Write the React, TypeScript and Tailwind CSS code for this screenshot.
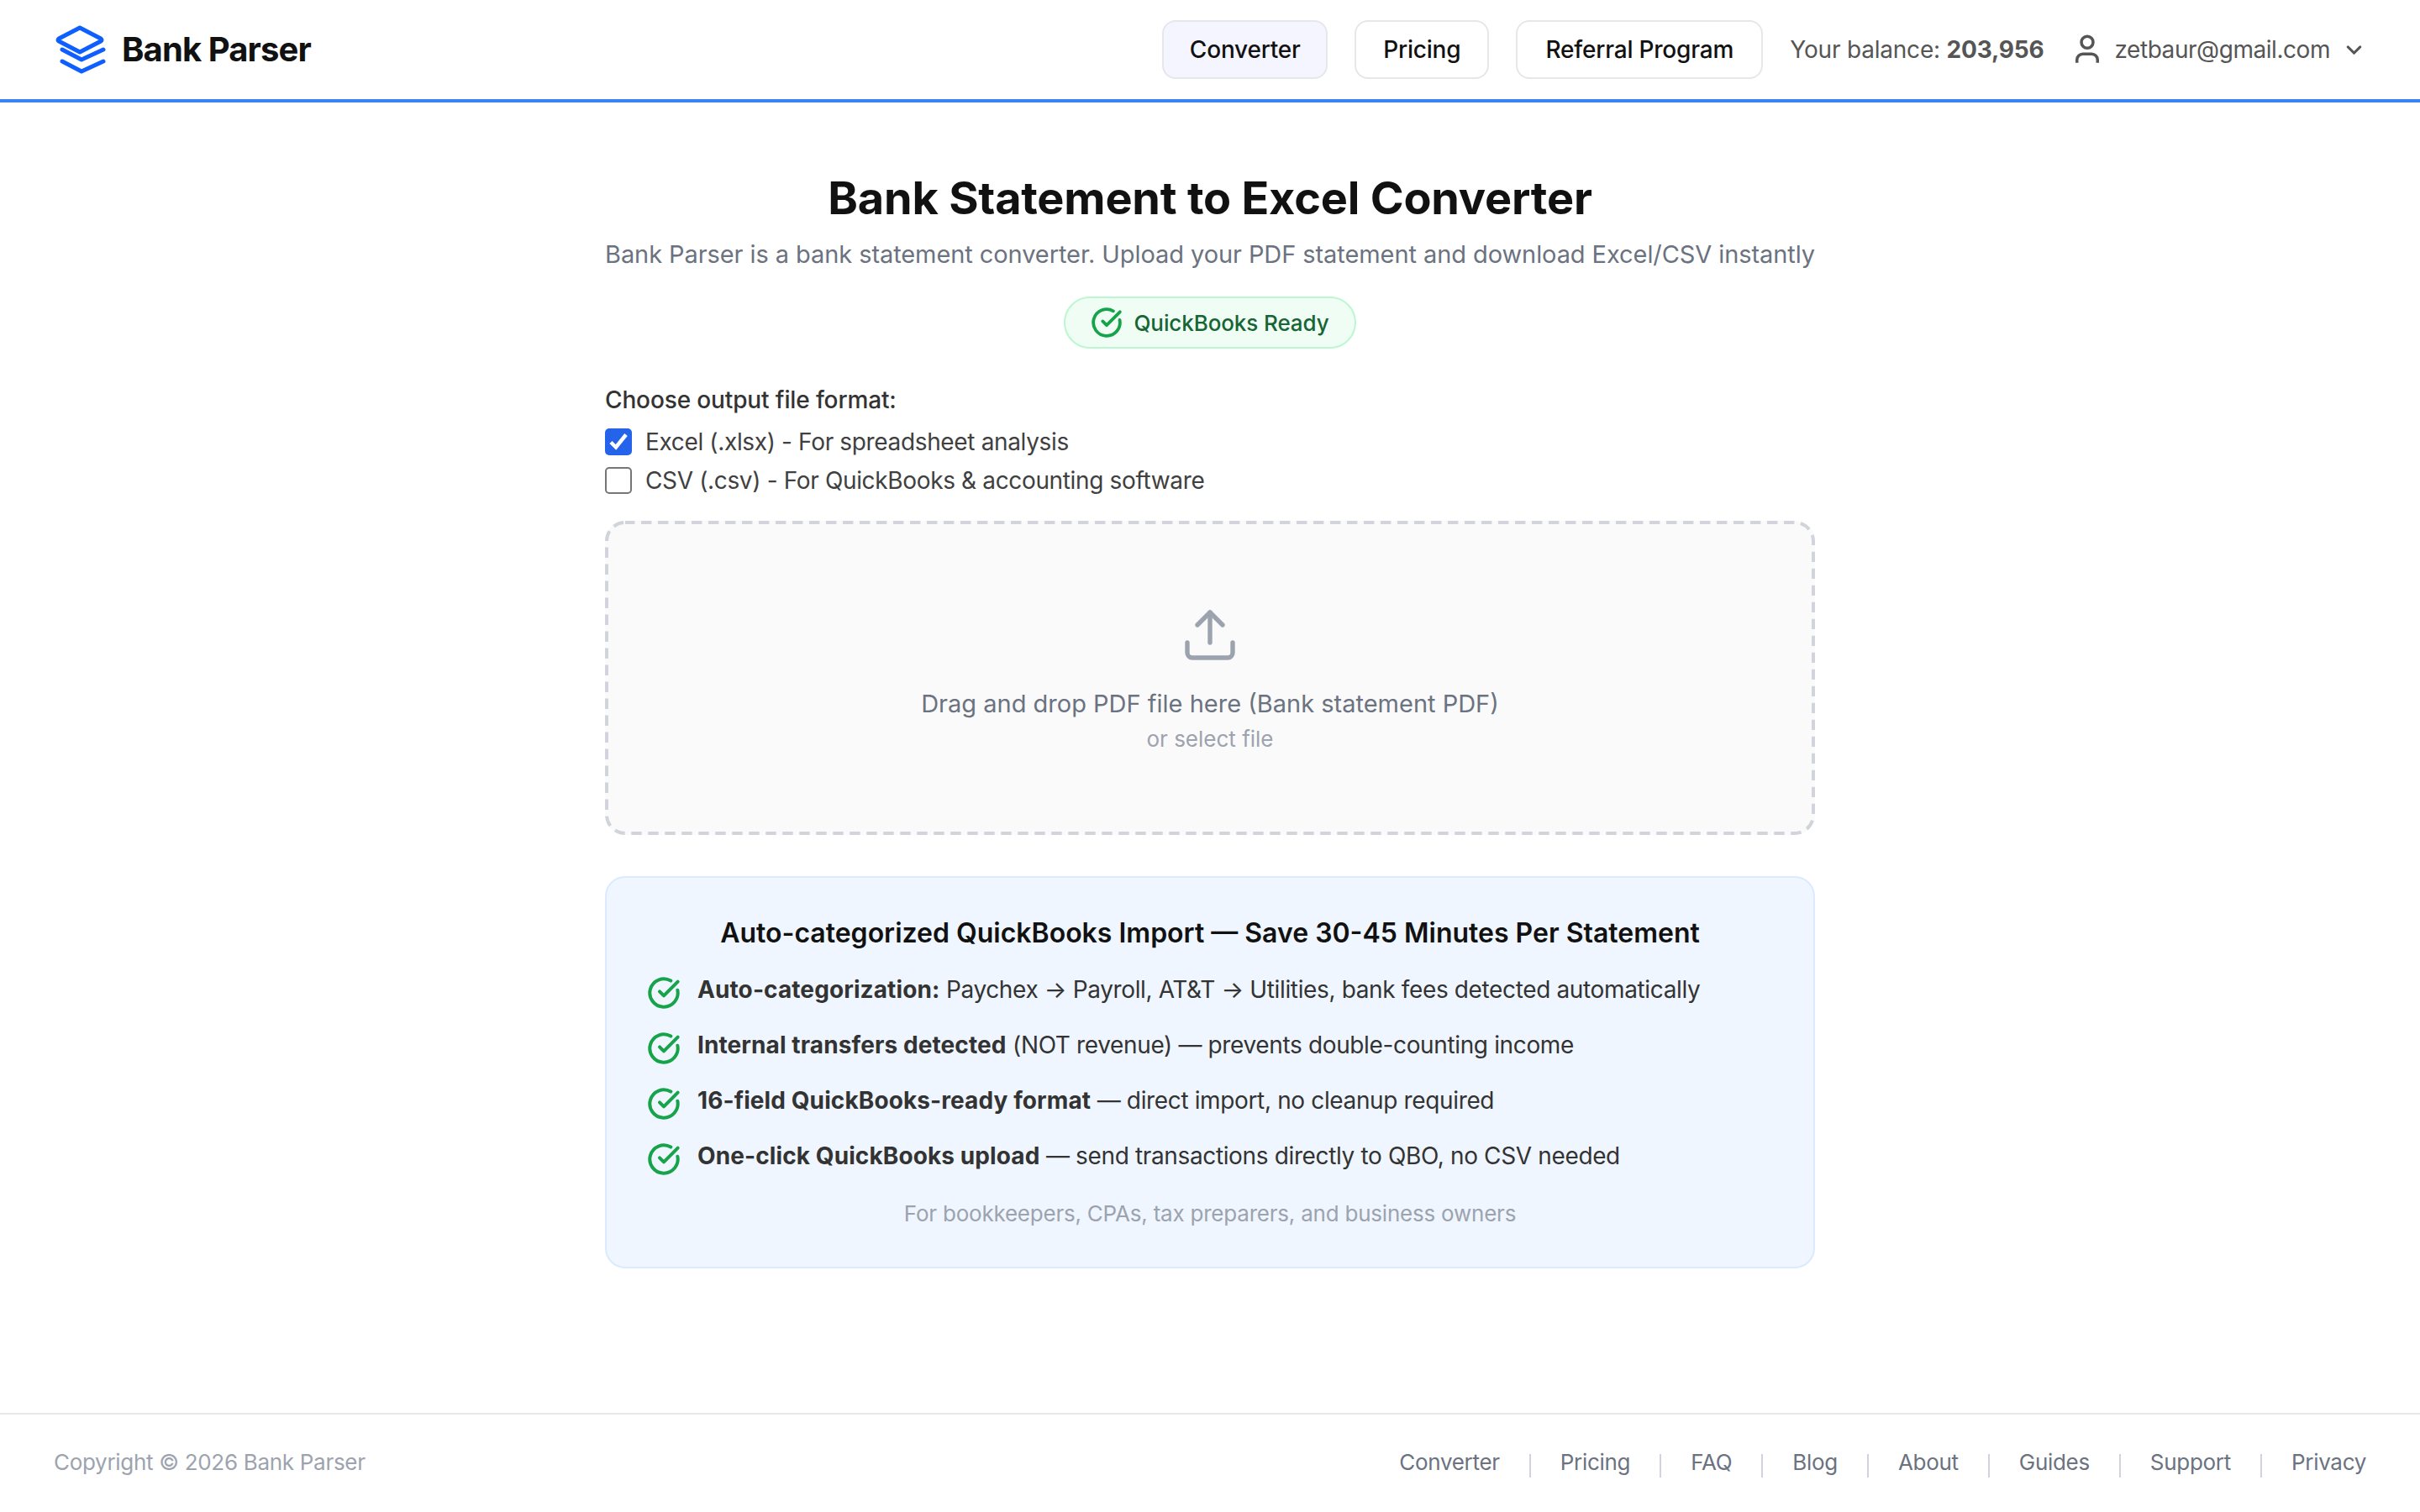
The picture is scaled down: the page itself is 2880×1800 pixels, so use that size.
import { ChevronDown, CircleCheckBig, Upload } from 'lucide-react';

const features = [
  { strong: 'Auto-categorization:', rest: ' Paychex → Payroll, AT&T → Utilities, bank fees detected automatically' },
  { strong: 'Internal transfers detected', rest: ' (NOT revenue) — prevents double-counting income' },
  { strong: '16-field QuickBooks-ready format', rest: ' — direct import, no cleanup required' },
  { strong: 'One-click QuickBooks upload', rest: ' — send transactions directly to QBO, no CSV needed' },
];

const footerLinks = ['Converter', 'Pricing', 'FAQ', 'Blog', 'About', 'Guides', 'Support', 'Privacy'];

function Logo() {
  return (
    <svg width="60" height="58" viewBox="0 0 60 58" fill="none" stroke="#0f5fff" strokeWidth="5" strokeLinecap="round" strokeLinejoin="round">
      <path d="M29 3 L54 16 Q56 17.5 54 19 L29 32 L4 19 Q2 17.5 4 16 Z" />
      <path d="M8 29 L31 41 L57 29" />
      <path d="M8 43 L31 55 L57 43" />
    </svg>
  );
}

function UserIcon() {
  return (
    <svg className="ml-[31px]" width="42" height="42" viewBox="0 0 24 24" fill="none" stroke="#555555" strokeWidth="2">
      <circle cx="12" cy="7" r="4" />
      <path d="M19 21v-2a4 4 0 0 0-4-4H9a4 4 0 0 0-4 4v2" />
    </svg>
  );
}

export default function App() {
  return (
    <div className="flex min-h-screen flex-col bg-white font-['Inter',sans-serif]">
      <header className="flex h-[122px] items-center justify-between border-b-4 border-[#3b82f6] pl-[66px] pr-[64px]">
        <div className="flex items-center gap-[19px]">
          <Logo />
          <span className="text-[40px] font-bold tracking-[-0.9px] text-[#111111]">Bank Parser</span>
        </div>
        <nav className="flex items-center">
          <a className="flex h-[70px] w-[197px] items-center justify-center rounded-[16px] border-2 border-[#e5e7eb] bg-[#f5f5ff] text-[28px] font-medium tracking-[-0.2px] text-[#111111]">Converter</a>
          <a className="ml-[32px] flex h-[70px] w-[160px] items-center justify-center rounded-[16px] border-2 border-[#e5e7eb] text-[28px] font-medium tracking-[-0.2px] text-[#111111]">Pricing</a>
          <a className="ml-[32px] flex h-[70px] w-[294px] items-center justify-center rounded-[16px] border-2 border-[#e5e7eb] text-[28px] font-medium tracking-[-0.2px] text-[#111111]">Referral Program</a>
          <span className="ml-[32px] text-[28px] tracking-[-0.2px] text-[#555555]">Your balance: <b className="font-bold">203,956</b></span>
          <UserIcon />
          <span className="ml-[11px] text-[28px] tracking-[-0.45px] text-[#555555]">zetbaur@gmail.com</span>
          <ChevronDown className="ml-[14px] text-[#555555]" size={29} strokeWidth={2.4} />
        </nav>
      </header>

      <main className="flex flex-1 justify-center">
        <div className="flex w-[1440px] flex-col pt-[78px]">
          <h1 className="text-center text-[54px] leading-[72px] font-bold tracking-[-0.2px] whitespace-nowrap text-[#111111]">Bank Statement to Excel Converter</h1>
          <p className="mt-[9px] text-center text-[29px] leading-[44px] tracking-[-0.08px] whitespace-nowrap text-[#6b7280]">Bank Parser is a bank statement converter. Upload your PDF statement and download Excel/CSV instantly</p>
          <div className="mt-[28px] flex justify-center">
            <span className="flex h-[62px] w-[348px] items-center justify-center gap-[13px] rounded-full border-2 border-[#bbf7d0] bg-[#f0fdf4] text-[26px] font-medium tracking-[-0.1px] text-[#166534]">
              <CircleCheckBig className="text-[#16a34a]" size={38} strokeWidth={2.4} />
              QuickBooks Ready
            </span>
          </div>
          <div className="mt-[41px] text-[28px] leading-[40px] font-medium tracking-[-0.13px] text-[#333333]">Choose output file format:</div>
          <label className="mt-[7px] flex h-[46px] items-center gap-[16px] text-[28px] tracking-[-0.35px] text-[#404040]">
            <span className="h-[32px] w-[32px] rounded-[5px] bg-[#2563eb]">
              <svg width="32" height="32" viewBox="0 0 32 32" fill="none" stroke="white" strokeWidth="4.5">
                <path d="M7 16.5 L13 22.5 L25 7.5" />
              </svg>
            </span>
            Excel (.xlsx) - For spreadsheet analysis
          </label>
          <label className="flex h-[46px] items-center gap-[16px] text-[28px] tracking-[-0.35px] text-[#404040]">
            <span className="h-[32px] w-[32px] rounded-[5px] border-2 border-[#767676] bg-white" />
            CSV (.csv) - For QuickBooks &amp; accounting software
          </label>

          <div className="relative mt-[25px] flex h-[374px] flex-col items-center rounded-[24px] bg-[#fafafa] pt-[100px]">
            <svg className="absolute inset-0" width="1440" height="374" fill="none">
              <rect x="2" y="2" width="1436" height="370" rx="22" stroke="#d1d5db" strokeWidth="4" strokeDasharray="12.4 7.6" strokeDashoffset="1" />
            </svg>
            <Upload className="text-[#9ca3af]" size={72} strokeWidth={1.8} />
            <div className="mt-[22px] text-[29px] leading-[48px] text-[#6b7280]">Drag and drop PDF file here (Bank statement PDF)</div>
            <div className="text-[26px] leading-[36px] text-[#9ca3af]">or select file</div>
          </div>

          <div className="mt-[49px] flex h-[467px] flex-col rounded-[24px] border-2 border-[#dbeafe] bg-[#eff6ff] px-[48px] pt-[42px]">
            <h2 className="text-center text-[32px] leading-[48px] font-semibold whitespace-nowrap text-[#111111]">Auto-categorized QuickBooks Import — Save 30-45 Minutes Per Statement</h2>
            <ul className="mt-[20px] flex flex-col gap-[20px]">
              {features.map((f) => (
                <li key={f.strong} className="flex h-[46px] items-center gap-[20px] text-[28px] whitespace-nowrap text-[#333333]">
                  <CircleCheckBig className="mt-[8px] shrink-0 text-[#16a34a]" size={40} strokeWidth={2.4} />
                  <span className="tracking-[-0.36px]"><b className="font-bold tracking-[0.1px]">{f.strong}</b>{f.rest}</span>
                </li>
              ))}
            </ul>
            <p className="mt-[26px] text-center text-[26px] leading-[40px] tracking-[-0.22px] text-[#9ca3af]">For bookkeepers, CPAs, tax preparers, and business owners</p>
          </div>
        </div>
      </main>

      <footer className="flex h-[118px] items-center justify-between border-t-2 border-[#e5e7eb] px-[64px] pb-[3px] text-[26px] tracking-[-0.3px]">
        <span className="text-[#9ca3af]">Copyright © 2026 Bank Parser</span>
        <div className="flex items-center">
          {footerLinks.map((link, i) => (
            <div key={link} className="flex items-center">
              {i > 0 && <span className="mx-[35px] mt-[8px] h-[28px] w-[2px] bg-[#d1d5db]" />}
              <a className="text-[#6b7280]">{link}</a>
            </div>
          ))}
        </div>
      </footer>
    </div>
  );
}
